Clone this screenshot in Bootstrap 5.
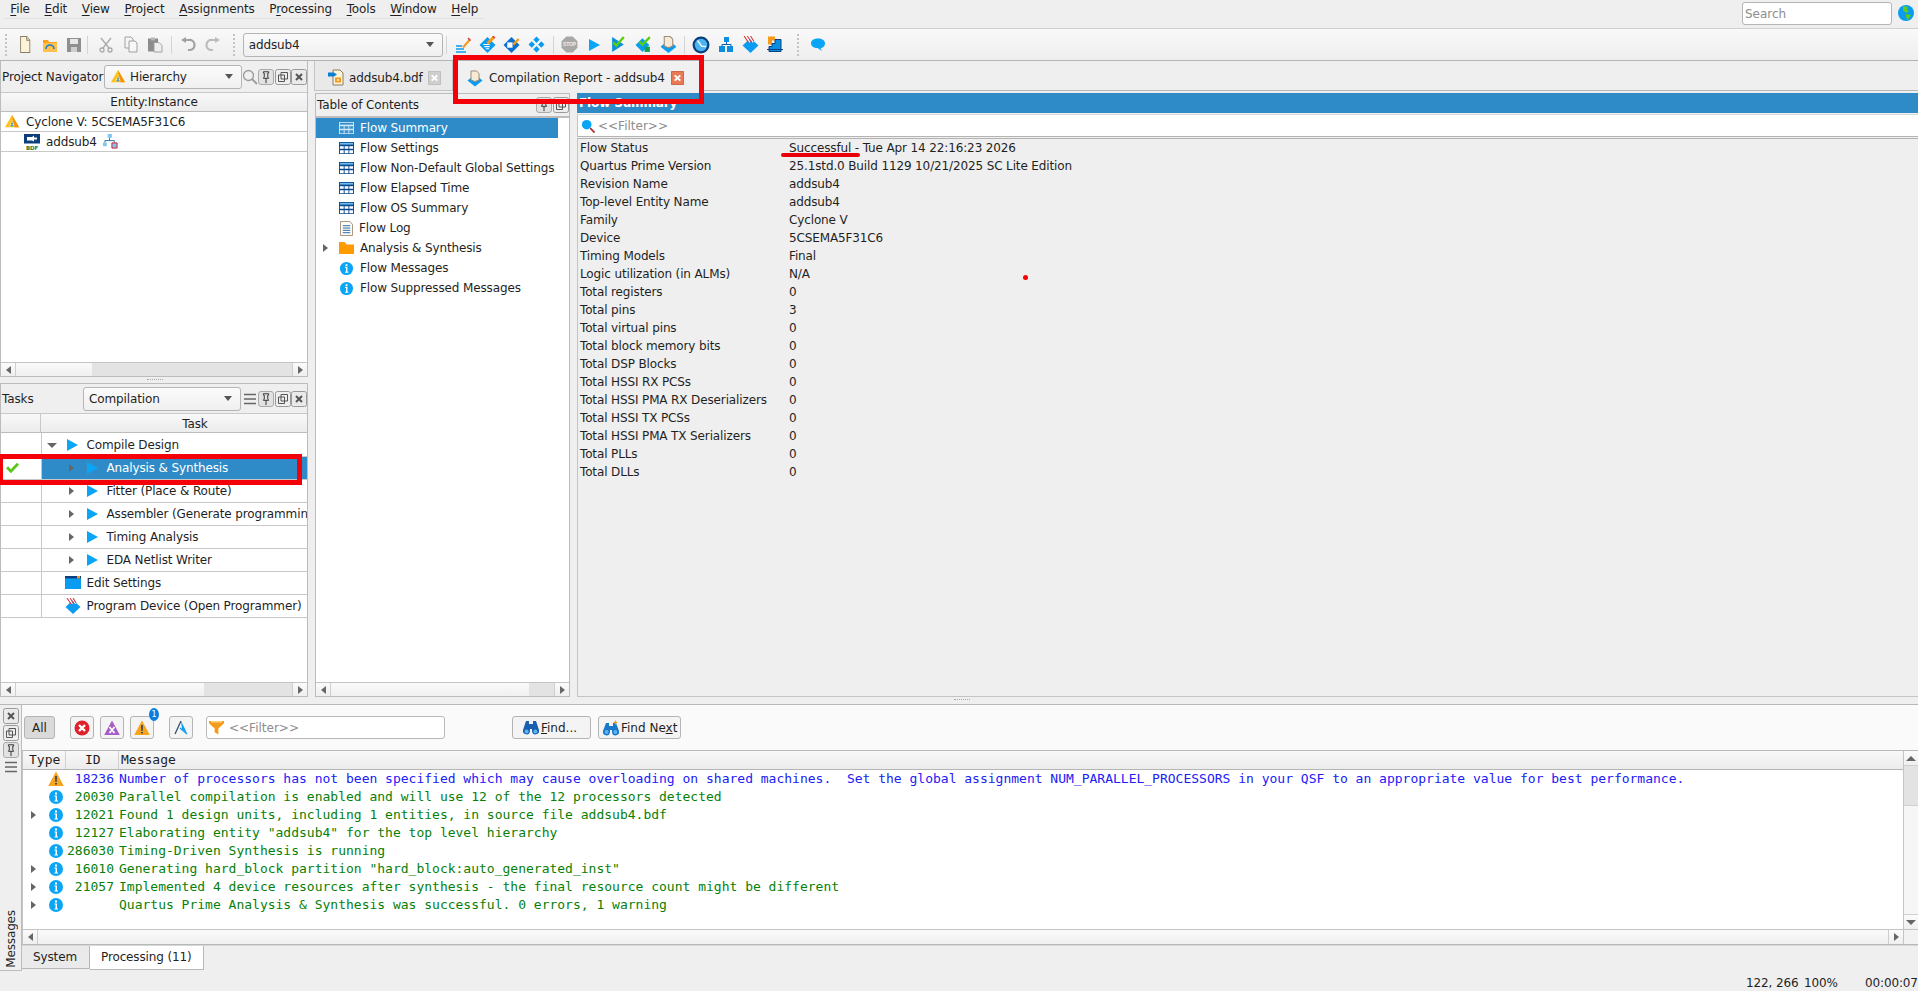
<!DOCTYPE html>
<html lang="en">
<head>
    <meta charset="UTF-8">
    <meta name="viewport" content="width=device-width, initial-scale=1.0">
    <title>Quartus Prime Lite Edition - addsub4</title>
    <link href="https://cdn.jsdelivr.net/npm/bootstrap@5.3.0/dist/css/bootstrap.min.css" rel="stylesheet">
    <style>
        body {
            font-family: "DejaVu Sans", sans-serif;
            font-size: 12px;
            letter-spacing: -0.13px;
            line-height: 18px;
            color: #1f1f1f;
            background: #efefef;
            height: 991px;
            overflow: hidden;
            position: relative;
        }
        svg { display: block; flex: none; }

        /* menu + toolbar */
        .menu-strip { height: 29px; border-bottom: 1px solid #d0d0d0; padding-left: 3px; }
        .menu-entry { height: 19px; padding: 0 7.300px; border-bottom: 1px solid #e2e2e2; }
        .menu-entry u { text-underline-offset: 2px; }
        .search-box { width: 150px; height: 23px; margin: 2px 0 0 auto; border: 1px solid #b5b5b5; border-radius: 3px; padding: 0 2px; font-size: 12px; line-height: 20px; box-shadow: none; background: #fff; }
        .search-box::placeholder, .flt-input::placeholder { color: #8d8d8d; }
        .globe-slot { width: 26px; padding: 5px 0 0 6px; }
        .tool-strip { height: 32px; background: linear-gradient(#f9f9f9, #eeeeee); border-bottom: 1px solid #b4b4b4; padding-left: 5px; }
        .tb-ico { width: 24.6px; height: 31px; }
        .tb-grip { width: 4px; height: 22px; border-left: 2px dotted #c4c4c4; }
        .tb-sep { width: 1px; height: 18px; background: #d4d4d4; }
        .sp-a { width: 6.200px; } .sp-b { width: 3.200px; } .sp-c { width: 4px; } .sp-d { width: 3.500px; } .sp-e { width: 4px; } .sp-f { width: 3.800px; }
        .grip-one { margin: 0 5.600px 0 8px; }
        .grip-two { margin: 0 4.800px 0 9px; }
        .main-combo { width: 200px; margin-right: 3px; }
        .qt-combo { height: 24px; background: linear-gradient(#fbfbfb, #f0f0f0); border: 1px solid #b4b4b4; border-radius: 3px; padding: 0 5px; }
        .qt-caret { width: 0; height: 0; margin-left: auto; margin-right: 3px; border-left: 4px solid transparent; border-right: 4px solid transparent; border-top: 5px solid #555; }

        /* work area */
        .work-area { height: 643px; }
        .left-col { width: 308px; }
        .pane-box { border: 1px solid #bcbcbc; border-top: 0; width: 308px; background: #fff; }
        .nav-pane { height: 316px; }
        .task-pane { height: 314px; border-top: 1px solid #bcbcbc; }
        .pane-head { background: #efefef; height: 31px; padding-left: 1px; white-space: nowrap; }
        .task-pane .pane-head { height: 29px; }
        .nav-title { width: 102px; }
        .task-title { width: 81px; }
        .nav-combo { width: 138px; }
        .task-combo { width: 158px; }
        .ctl-row { margin-left: auto; }
        .ctl-btn { width: 16px; height: 16px; }
        .pin-on { background: #e2e2e2; border: 1px solid #aaa; border-radius: 3px; margin-right: 1px; }
        .col-head { height: 20px; background: linear-gradient(#f8f8f8, #ececec); border-top: 1px solid #c8c8c8; border-bottom: 1px solid #bcbcbc; text-align: center; line-height: 19px; }
        .tree-row { height: 20px; border-bottom: 1px solid #c8c8c8; }
        .dev-row { padding-left: 3px; gap: 6px; }
        .bdf-row { padding-left: 23px; gap: 6px; }
        .grow-fill { flex: 1 1 auto; min-height: 0; }
        .split-dots { height: 6px; font-size: 0; }
        .split-dots i { display: block; width: 16px; margin: 2px 0 0 147px; border-top: 1px dotted #a8a8a8; }
        .split-wide i { margin-left: 640px; }

        .sb-h { height: 14px; background: #f2f2f2; border-top: 1px solid #c4c4c4; flex: none; }
        .sb-btn { width: 15px; height: 100%; background: linear-gradient(#fbfbfb, #efefef); display: flex; align-items: center; justify-content: center; border-right: 1px solid #cfcfcf; flex: none; }
        .sb-btn.end { border-right: 0; border-left: 1px solid #cfcfcf; }
        .sb-track { flex: 1 1 auto; background: linear-gradient(#fafafa, #f0f0f0); }
        .sb-thumb { background: #e3e3e3; flex: none; }
        .nav-thumb { width: 200px; } .task-thumb { width: 88px; } .toc-thumb { width: 25px; }
        .tri-l { width: 0; height: 0; border-top: 4px solid transparent; border-bottom: 4px solid transparent; border-right: 5px solid #666; }
        .tri-r { width: 0; height: 0; border-top: 4px solid transparent; border-bottom: 4px solid transparent; border-left: 5px solid #666; }
        .tri-u { width: 0; height: 0; border-left: 5px solid transparent; border-right: 5px solid transparent; border-bottom: 5px solid #666; }
        .tri-d { width: 0; height: 0; border-left: 5px solid transparent; border-right: 5px solid transparent; border-top: 5px solid #666; }
        .tri-r, .tri-d, .tri-l, .tri-u { flex: none; }

        .task-grid { --bs-table-bg: transparent; margin: 0; table-layout: fixed; width: 306px; border-collapse: collapse; }
        .task-grid td { height: 23px; padding: 0; border: 1px solid #c8c8c8; border-top: 0; color: #1f1f1f; white-space: nowrap; overflow: hidden; background: #fff; box-shadow: none; }
        .task-grid td:first-child { width: 40px; border-left: 0; }
        .task-grid td:last-child { border-right: 0; }
        .task-head { height: 20px; display: flex; background: linear-gradient(#f8f8f8, #ececec); border-top: 1px solid #c8c8c8; border-bottom: 1px solid #bcbcbc; }
        .task-head div:first-child { width: 40px; border-right: 1px solid #c8c8c8; }
        .task-head div:last-child { flex: 1; text-align: center; line-height: 21px; padding-left: 42px; }
        .cell-flex { height: 22px; }
        .lvl-one { padding: 2px 0 0 5px; }
        .lvl-one svg { margin: 0 8.500px 0 10.500px; }
        .lvl-two { padding-left: 27.500px; }
        .lvl-two svg { margin: 0 8.500px 0 13px; }
        .lvl-leaf { padding-left: 23px; }
        .lvl-leaf svg { margin-right: 6px; }
        .task-sel, .task-grid td.task-sel { background: #2e8bc7; color: #fff; }

        /* report */
        .center-col { width: 1610px; margin-left: 6px; }
        .tab-strip { height: 32px; }
        .doc-tab { height: 30px; padding: 4px 13px 0 13px; gap: 5px; border: 1px solid #c4c4c4; border-top: 0; background: #e9e9e9; width: 139px; white-space: nowrap; }
        .doc-tab.on { background: #f0f0f0; width: 251px; border: 0; padding: 4px 20px 0 14px; gap: 6px; }
        .tab-line { flex: 1 1 auto; height: 30px; border-bottom: 1px solid #b8b8b8; }
        .tab-x { margin-left: auto; }
        .report-row { height: 604px; }
        .toc-pane { width: 255px; border: 1px solid #bcbcbc; background: #fff; margin-left: 1px; }
        .toc-head { height: 24px; background: #efefef; border-bottom: 2px solid #bcbcbc; padding-left: 1px; }
        .toc-line { height: 20px; width: 242px; white-space: nowrap; }
        .toc-line.sel { background: #2e8bc7; color: #fff; }
        .toc-arrow { width: 23px; padding-left: 7px; flex: none; }
        .toc-ico { margin-right: 6px; width: 15px; }
        .toc-slim { margin-left: 1px; margin-right: 6px; width: 13px; }
        .summary-pane { width: 1341px; margin-left: 7px; flex: none; }
        .flow-title { height: 20px; background: #2e8bc7; color: #fff; font-weight: 700; padding-left: 2px; line-height: 20px; }
        .flow-filter { height: 23px; margin-top: 1px; background: #fff; border-top: 1px solid #d8d8d8; border-bottom: 1px solid #b4b4b4; border-left: 1px solid #c4c4c4; padding-left: 3px; gap: 3px; }
        .flt-input { border: 0; padding: 0; font-size: 12px; background: transparent; box-shadow: none; line-height: 18px; }
        .flow-body { flex: 1 1 auto; margin-top: 1px; border-top: 1px solid #b4b4b4; border-left: 1px solid #c4c4c4; border-bottom: 1px solid #c4c4c4; padding: 0 0 0 2px; }
        .flow-grid { --bs-table-bg: transparent; margin: 0; width: auto; }
        .flow-grid td { padding: 0; height: 18px; line-height: 18px; border: 0; color: #1f1f1f; white-space: nowrap; }
        .flow-grid td:first-child { width: 209px; }

        /* messages */
        .msg-dock { height: 267px; border-top: 1px solid #b8b8b8; }
        .dock-rail { width: 22px; border-right: 1px solid #bcbcbc; border-bottom: 1px solid #bcbcbc; padding: 3px 0 0 3px; gap: 1px; }
        .rail-btn { width: 16px; height: 16px; }
        .rail-pin { height: 16px; width: 16px; margin: 0; }
        .rail-text { writing-mode: vertical-rl; transform: rotate(180deg); margin-top: auto; line-height: 16px; margin-bottom: 2px; }
        .dock-main { width: 1896px; }
        .msg-tools { height: 45px; background: #fafafa; padding-left: 2px; position: relative; }
        .flag-btn, .btn.flag-btn { width: 24px; height: 23px; padding: 0; border: 1px solid #b4b4b4; border-radius: 3px; background: #f4f4f4; display: flex; align-items: center; justify-content: center; }
        .btn.all-btn { width: 31px; height: 23px; padding: 0; font-size: 12px; line-height: 20px; background: #dadada; border: 1px solid #b4b4b4; border-radius: 3px; color: #1f1f1f; margin-right: 15px; }
        .gap-flag { margin-left: 6px; }
        .gap-mark { margin-left: 15px; }
        .count-dot { position: absolute; left: 127px; top: 3px; width: 10px; height: 13px; border-radius: 50%; background: #0a7fe0; color: #fff; font-size: 8px; line-height: 13px; text-align: center; }
        .msg-filter { width: 239px; height: 23px; margin-left: 13px; background: #fff; border: 1px solid #b8b8b8; border-radius: 3px; padding-left: 2px; gap: 5px; }
        .btn.find-btn { height: 23px; padding: 0 0 0 4px; font-size: 12px; line-height: 20px; background: #f4f4f4; border: 1px solid #b4b4b4; border-radius: 3px; color: #1f1f1f; display: flex; align-items: center; gap: 2px; white-space: nowrap; }
        .btn.find-one { width: 79px; margin-left: 67px; padding-left: 10px; }
        .btn.find-two { width: 83px; margin-left: 7px; }
        .msg-body { height: 194px; }
        .msg-table { width: 1881px; background: #fff; }
        .msg-col-head { height: 20px; background: linear-gradient(#f8f8f8, #ececec); border-top: 1px solid #b8b8b8; border-bottom: 1px solid #b4b4b4; border-left: 1px solid #c4c4c4; font-family: "DejaVu Sans Mono", monospace; font-size: 13px; letter-spacing: 0; line-height: 18px; }
        .mh-type { width: 43px; padding-left: 6px; border-right: 1px solid #d0d0d0; }
        .mh-id { width: 53px; padding-left: 19px; border-right: 1px solid #d0d0d0; }
        .mh-msg { padding-left: 2px; }
        .msg-list { height: 159px; font-family: "DejaVu Sans Mono", monospace; font-size: 13px; letter-spacing: 0; border-left: 1px solid #c4c4c4; }
        .msg-line { height: 18px; white-space: pre; }
        .msg-arrow { width: 25px; padding-left: 8px; flex: none; }
        .msg-num { width: 50px; text-align: right; flex: none; }
        .msg-text { margin-left: 5px; }
        .tone-info { color: #087f08; }
        .tone-warn { color: #2020f5; }
        .sb-v { width: 15px; border-top: 1px solid #b8b8b8; border-left: 1px solid #c4c4c4; background: #f6f6f6; }
        .sb-vbtn { height: 15px; display: flex; align-items: center; justify-content: center; background: linear-gradient(#fbfbfb, #efefef); border-bottom: 1px solid #cfcfcf; }
        .sb-vbtn.end { border-bottom: 0; border-top: 1px solid #cfcfcf; margin-top: auto; }
        .sb-vthumb { height: 40px; background: #e3e3e3; border-bottom: 1px solid #d0d0d0; }
        .msg-hbar { height: 15px; border-left: 1px solid #c4c4c4; border-top: 1px solid #c4c4c4; background: #f4f4f4; }
        .corner-box { width: 15px; flex: none; border-left: 0; background: #f2f2f2; }
        .dock-line { height: 2px; border-top: 1px solid #b8b8b8; border-bottom: 1px solid #d8d8d8; }
        .view-tab { height: 23px; width: 68px; padding: 2px 0 0 11px; background: #eaeaea; border-right: 1px solid #b8b8b8; border-bottom: 1px solid #b8b8b8; }
        .view-tab.on { width: 114px; background: #fff; height: 24px; }

        .status-strip { height: 20px; padding-top: 3px; }
        .st-xy { width: 58px; }
        .st-zoom { width: 61px; }
        .st-time { width: 53px; white-space: nowrap; }

        /* annotations drawn on top of the screenshot */
        .red-box { position: absolute; border-style: solid; border-color: #f40008; pointer-events: none; }
        .red-tab { left: 453px; top: 55px; width: 251px; height: 49px; border-width: 5px; }
        .red-task { left: 0; top: 454px; width: 302px; height: 31px; border-width: 5px 5px 5px 3px; }
        .red-line { position: absolute; left: 781px; top: 153px; width: 79px; height: 4px; border-radius: 2px; background: #e8000b; }
        .red-dot { position: absolute; left: 1023px; top: 275px; width: 5px; height: 5px; border-radius: 50%; background: #f00; }
    </style>
</head>
<body>
    <svg width="0" height="0" class="position-absolute">
        <defs>
            <symbol id="i-new" viewBox="0 0 16 16" preserveAspectRatio="none"><path d="M3 .5h7l3.500 3.500V15.500H3z" fill="#fff3d6" stroke="#8a7a68"/><path d="M10 .5V4h3.500" fill="#e8dcc4" stroke="#8a7a68"/></symbol>
            <symbol id="i-open" viewBox="0 0 16 16"><path d="M1 3h5l1 2h8v10H1z" fill="#f9a11b"/><path d="M1 6h14v9H1z" fill="#ffc04d"/><path d="M4 12a4 4 0 0 1 8 0" fill="none" stroke="#1b7fd0" stroke-width="1.600"/></symbol>
            <symbol id="i-save" viewBox="0 0 16 16"><path d="M1 1h14v14H1z" fill="#8f8f8f"/><path d="M4 2h8v5H4z" fill="#e8e8e8"/><path d="M5 10h6v5H5z" fill="#cfcfcf"/></symbol>
            <symbol id="i-cut" viewBox="0 0 16 16"><g fill="none" stroke="#a8a8a8" stroke-width="1.300"><path d="M13 1 5 11M3 1l8 10"/><circle cx="4" cy="13" r="2"/><circle cx="12" cy="13" r="2"/></g></symbol>
            <symbol id="i-copy" viewBox="0 0 16 16"><g fill="#f6f6f6" stroke="#a0a0a0"><path d="M2 .5h6l2 2v9H2z"/><path d="M6 4.500h6l2 2v9H6z"/></g></symbol>
            <symbol id="i-paste" viewBox="0 0 16 16"><path d="M1 2h10v13H1z" fill="#8c8c8c"/><path d="M4 1h4v3H4z" fill="#b8b8b8"/><path d="M7 6h5l3 3v6.500H7z" fill="#efefef" stroke="#a0a0a0"/></symbol>
            <symbol id="i-undo" viewBox="0 0 16 16"><path d="M4 3h5a5 5 0 0 1 1 10H8" fill="none" stroke="#a2a2a2" stroke-width="2.200"/><path d="M6 0v6L1 3z" fill="#a2a2a2"/></symbol>
            <symbol id="i-redo" viewBox="0 0 16 16"><path d="M12 3H7a5 5 0 0 0-1 10h2" fill="none" stroke="#bcbcbc" stroke-width="2.200"/><path d="M10 0v6l5-3z" fill="#bcbcbc"/></symbol>
            <symbol id="i-pen" viewBox="0 0 16 16"><path d="M1 9h6M1 12h8M1 15h10" stroke="#0a9cf0" stroke-width="1.500"/><path d="M7 10 14 2l1.500 1.500L9 11z" fill="#f59a1b"/><path d="M13 1l2.500 2.500" stroke="#d8363a" stroke-width="1.500"/></symbol>
            <symbol id="i-dia-pen" viewBox="0 0 16 16"><path d="M8 1l7.500 7.500L8 16 .5 8.500z" fill="#0a9cf0"/><path d="M4 8h6M5 10h5M6.500 12h3" stroke="#fff"/><path d="M7 6l6-6 2 2-6 6z" fill="#f59a1b"/><path d="M13 0l2 2" stroke="#d8363a" stroke-width="1.300"/></symbol>
            <symbol id="i-dia-plug" viewBox="0 0 16 16"><path d="M8 1l7.500 7.500L8 16 .5 8.500z" fill="#0a6fd0"/><path d="M4 6h5v5H4z" fill="#fff"/><path d="M9 7l5-5 1.500 1.500L10.500 9z" fill="#f59a1b"/></symbol>
            <symbol id="i-dia-four" viewBox="0 0 16 16"><g fill="#0a9cf0"><path d="M8 .5l3 3-3 3-3-3z"/><path d="M12.500 5l3 3-3 3-3-3z"/><path d="M3.500 5l3 3-3 3-3-3z"/><path d="M8 9.500l3 3-3 3-3-3z"/></g><path d="M6 10l5-5" stroke="#fff"/></symbol>
            <symbol id="i-stop" viewBox="0 0 16 16"><path d="M5 .5h6L15.500 5v6L11 15.500H5L.5 11V5z" fill="#a8a8a8"/><text x="8" y="9.800" text-anchor="middle" font-size="4.800" font-weight="700" font-family="Liberation Sans, sans-serif" fill="#eee">STOP</text></symbol>
            <symbol id="i-play" viewBox="2.500 1.500 11.500 13" preserveAspectRatio="none"><path d="M2.500 1.500 14 8 2.500 14.500z" fill="#0aa6f5"/></symbol>
            <symbol id="i-play-chk" viewBox="0 0 16 16"><path d="M2 1 13 8 2 15z" fill="#0a8fe0"/><path d="M3 6l3 3 7-8" fill="none" stroke="#55d010" stroke-width="2.200"/></symbol>
            <symbol id="i-dia-chk" viewBox="0 0 16 16"><path d="M7 2l6.500 6.500L7 15 .5 8.500z" fill="#0a9cf0"/><path d="M4 5l3 3 7-7" fill="none" stroke="#55d010" stroke-width="2.200"/><path d="M9 10h5v5H9z" fill="#10a050"/></symbol>
            <symbol id="i-dia-page" viewBox="0 0 16 16"><path d="M8 4l7.500 6L8 16 .5 10z" fill="#0a9cf0"/><path d="M4 .5h5.500L12 3v6.500l-4 1.500-4-1.500z" fill="#f8ebd6" stroke="#a08a78"/></symbol>
            <symbol id="i-clock" viewBox="0 0 16 16"><circle cx="8" cy="8" r="7.500" fill="#0c3f7c"/><circle cx="8" cy="8" r="5.500" fill="#4db4f2"/><path d="M5 4l3.500 5 4 .5" fill="none" stroke="#fff" stroke-width="1.200"/></symbol>
            <symbol id="i-hier" viewBox="0 0 16 16"><g fill="#0a8fe0"><path d="M6 0h5v5H6z"/><path d="M1 9h6v6H1z"/><path d="M9 9h6v6H9z"/></g><path d="M8.500 5v3M4 9V7.500h9V9" fill="none" stroke="#0c5fa8"/></symbol>
            <symbol id="i-prog" viewBox="0 0 16 16"><path d="M8 2l7.500 7L8 16 .5 9z" fill="#0a9cf0"/><path d="M2 0l4 6M5 0l4 6M8 0l3 5" stroke="#d8363a" stroke-width="1.100"/><path d="M3.500 0l4 6M6.500 0l4 6" stroke="#fff"/></symbol>
            <symbol id="i-chip" viewBox="0 0 16 16"><path d="M1 0h7v4H5v4H1z" fill="#f59a1b"/><path d="M2 15V10h3V7h3V3h6v12z" fill="#0a8fe0" stroke="#0c3f7c"/><path d="M0 13h16" stroke="#0c3f7c"/></symbol>
            <symbol id="i-bubble" viewBox="0 0 16 16"><path d="M8 1.500c4 0 7 1.800 7 4.700S12.800 11 10.500 11l1.500 3-4.500-3C3.500 11 1 9 1 6.200S4 1.500 8 1.500z" fill="#0aa6f5"/></symbol>
            <symbol id="i-globe" viewBox="0 0 16 16"><circle cx="8" cy="8" r="8" fill="#0a9cf0"/><path d="M5 1l5 1-1 3 2 1-3 2-3-3zM8 9l5 1-3 5-2-3z" fill="#60cc18"/></symbol>
            <symbol id="i-device" viewBox="0 0 16 16"><path d="M8 1l7.500 13H.5z" fill="#ffc21a"/><path d="M8 1 15.500 14h-5z" fill="#f59000"/><path d="M8 6 11 13H5z" fill="#ffe680"/><path d="M6.500 12.500h3M7 10.500h2M7.500 8.500h1" stroke="#0a7fe0" stroke-width="1.200"/></symbol>
            <symbol id="i-bdf" viewBox="0 0 16 16"><path d="M0 0h16v9.500H0z" fill="#0c3f7c"/><path d="M3 3h5l2-1.500v2h3v2h-3v2L8 6.500H3z" fill="#fff"/><text x="8" y="15.800" text-anchor="middle" font-size="5.500" font-weight="700" font-family="DejaVu Sans, sans-serif" fill="#1f7a30">BDF</text></symbol>
            <symbol id="i-tree" viewBox="0 0 16 16"><path d="M5 0h4.500v4H5zM0 9h4v4H0z" fill="#7fc8ef"/><path d="M7 4v3M2 9V7h10v2" fill="none" stroke="#2a6fa8"/><path d="M9.500 9.500H15V15H9.500z" fill="#7fc8ef" stroke="#e01020"/></symbol>
            <symbol id="i-bdf-doc" viewBox="0 0 16 16"><path d="M5 .5h7l3 3V15.500H5z" fill="#fff3d6" stroke="#8a7a68"/><path d="M0 3h6l3 2-3 2H0z" fill="#0a7fd0"/><path d="M7 8h6v5H7z" fill="#f59a1b"/><path d="M9 10.500h2M10 9.500v2" stroke="#fff"/></symbol>
            <symbol id="i-x" viewBox="0 0 16 16"><path d="M2.500.5h11a2 2 0 0 1 2 2v11a2 2 0 0 1-2 2h-11a2 2 0 0 1-2-2v-11a2 2 0 0 1 2-2z" fill="#eaeaea" stroke="#9a9a9a"/><path d="M5 5l6 6M11 5l-6 6" stroke="#555" stroke-width="2"/></symbol>
            <symbol id="i-tab-x" viewBox="0 0 14 16" preserveAspectRatio="none"><path d="M.5.5h13v15H.5z" fill="#cfcfcf" stroke="#bbb"/><path d="M4 5l6 6M10 5l-6 6" stroke="#fff" stroke-width="2.200"/></symbol>
            <symbol id="i-tab-xr" viewBox="0 0 14 16" preserveAspectRatio="none"><path d="M.5.5h13v15H.5z" fill="#e87a55" stroke="#cc5a40"/><path d="M4 5l6 6M10 5l-6 6" stroke="#fff" stroke-width="2.200"/></symbol>
            <symbol id="i-float" viewBox="0 0 16 16"><path d="M2.500.5h11a2 2 0 0 1 2 2v11a2 2 0 0 1-2 2h-11a2 2 0 0 1-2-2v-11a2 2 0 0 1 2-2z" fill="#eee" stroke="#9a9a9a"/><path d="M6 3.500h6.500V10H6zM3.500 6H9.500V12.500H3.500z" fill="none" stroke="#555"/></symbol>
            <symbol id="i-pin" viewBox="0 0 16 16"><path d="M5 2h6v1.500H10V8l1 1.500H5L6 8V3.500H5zM8 9.500V15" fill="none" stroke="#333" stroke-width="1.100"/></symbol>
            <symbol id="i-lens" viewBox="0 0 16 16"><circle cx="6.500" cy="6.500" r="5" fill="none" stroke="#9a9a9a" stroke-width="1.300"/><path d="M10 10l5 5" stroke="#9a9a9a" stroke-width="1.800"/></symbol>
            <symbol id="i-list" viewBox="0 0 16 16"><path d="M2 3.500h12M2 8h12M2 12.500h12" stroke="#666" stroke-width="1.600"/></symbol>
            <symbol id="i-check" viewBox="0 0 16 16"><path d="M0 9l2.500-2.500L6 10l7.500-8L16 4.500 6 15z" fill="#58c81a"/></symbol>
            <symbol id="i-settings" viewBox="0 0 16 16" preserveAspectRatio="none"><path d="M0 0h16v16H0z" fill="#0a9cf0"/><path d="M0 0h16v3H0z" fill="#0c3f7c"/><path d="M12 0h3v3h-3z" fill="#f59a1b"/></symbol>
            <symbol id="i-grid" viewBox="0 0 16 14" preserveAspectRatio="none"><path d="M0 0h16v14H0z" fill="#0c4a90"/><path d="M1 1h14v2H1z" fill="#6cbcec"/><path d="M1 5h4v3H1zM6 5h4v3H6zM11 5h4v3h-4zM1 9.500h4V13H1zM6 9.500h4V13H6zM11 9.500h4V13h-4z" fill="#fff"/></symbol>
            <symbol id="i-grid-sel" viewBox="0 0 16 14" preserveAspectRatio="none"><path d="M0 0h16v14H0z" fill="#cfe6f6"/><path d="M1 1h14v2H1z" fill="#2e8bc7"/><path d="M1 5h4v3H1zM6 5h4v3H6zM11 5h4v3h-4zM1 9.500h4V13H1zM6 9.500h4V13H6zM11 9.500h4V13h-4z" fill="#3a93cc"/></symbol>
            <symbol id="i-log" viewBox="0 0 14 16"><path d="M.5.5h10l3 3v12H.5z" fill="#fffdf6" stroke="#a08a78"/><path d="M3 5h8M3 7.500h8M3 10h8M3 12.500h8" stroke="#1a5fb0"/></symbol>
            <symbol id="i-folder" viewBox="0 0 16 14" preserveAspectRatio="none"><path d="M0 0h6l2 3h8v11H0z" fill="#ff9a00"/></symbol>
            <symbol id="i-info" viewBox="0 0 16 16"><circle cx="8" cy="8" r="7" fill="#0aa6f5"/><path d="M7 3.500h2v2H7zM6.500 6.500H9v5h1v1H6.500v-1h1v-4h-1z" fill="#fff"/></symbol>
            <symbol id="i-warn" viewBox="0 0 16 16"><path d="M8 .5 15.800 15H.2z" fill="#f7a51c"/><path d="M7.200 5h1.600l-.2 6H7.400zM7.200 12h1.600v1.600H7.200z" fill="#17356b"/></symbol>
            <symbol id="i-err" viewBox="0 0 16 16"><circle cx="8" cy="8" r="7.500" fill="#e0202a"/><path d="M5 5l6 6M11 5l-6 6" stroke="#fff" stroke-width="2.400"/></symbol>
            <symbol id="i-crit" viewBox="0 0 16 16"><path d="M8 .5 15.800 15H.2z" fill="#a85cc8"/><path d="M5.500 7l5 6M10.500 7l-5 6" stroke="#fff" stroke-width="1.800"/></symbol>
            <symbol id="i-mark" viewBox="0 0 16 16"><path d="M8 1 14 13 9 9z" fill="#0a9cf0"/><path d="M8 1 2 14" stroke="#33506e" stroke-width="1.300"/><path d="M7 8l7 6" stroke="#0a9cf0" stroke-width="1.300"/></symbol>
            <symbol id="i-funnel" viewBox="0 0 16 16"><path d="M0 1h16v2.500L10 9v6.500L6 13V9L0 3.500z" fill="#f59a1b"/><path d="M2 2h12" stroke="#fff3c4"/></symbol>
            <symbol id="i-find" viewBox="0 0 16 16"><path d="M3 1h3v3h4V1h3l3 9a3.500 3.500 0 1 1-7 1.500V9H7v2.500A3.500 3.500 0 1 1 0 10z" fill="#1a5fb0"/><circle cx="3.600" cy="11.500" r="2" fill="#5bb5ee"/><circle cx="12.400" cy="11.500" r="2" fill="#5bb5ee"/></symbol>
            <symbol id="i-find-star" viewBox="0 0 16 16"><path d="M3 3h3v3h4V3h3l3 8a3.500 3.500 0 1 1-7 1.500V10H7v2.500A3.500 3.500 0 1 1 0 11z" fill="#1a78c8"/><circle cx="3.600" cy="12" r="2" fill="#5bb5ee"/><circle cx="12.400" cy="12" r="2" fill="#5bb5ee"/><path d="M12.500 0l.8 1.700 1.700.8-1.700.8-.8 1.700-.8-1.700-1.700-.8 1.700-.8z" fill="#f59a1b"/></symbol>
            <symbol id="i-search-blue" viewBox="0 0 16 16"><circle cx="6.500" cy="6.500" r="5.500" fill="#0aa6f5"/><path d="M10.500 10.500l5 5" stroke="#b03030" stroke-width="2"/></symbol>
        </defs>
    </svg>

    <!-- menu -->
    <nav class="menu-strip d-flex align-items-start">
        <span class="menu-entry"><u>F</u>ile</span>
        <span class="menu-entry"><u>E</u>dit</span>
        <span class="menu-entry"><u>V</u>iew</span>
        <span class="menu-entry"><u>P</u>roject</span>
        <span class="menu-entry"><u>A</u>ssignments</span>
        <span class="menu-entry">P<u>r</u>ocessing</span>
        <span class="menu-entry"><u>T</u>ools</span>
        <span class="menu-entry"><u>W</u>indow</span>
        <span class="menu-entry"><u>H</u>elp</span>
        <input class="form-control search-box" placeholder="Search">
        <div class="globe-slot"><svg width="16" height="16"><use href="#i-globe"/></svg></div>
    </nav>

    <!-- main toolbar -->
    <div class="tool-strip d-flex align-items-center">
        <div class="tb-grip"></div>
        <div class="tb-ico d-flex align-items-center justify-content-center ms-1"><svg width="14" height="17"><use href="#i-new"/></svg></div>
        <div class="tb-ico d-flex align-items-center justify-content-center"><svg width="16" height="16"><use href="#i-open"/></svg></div>
        <div class="tb-ico d-flex align-items-center justify-content-center"><svg width="16" height="16"><use href="#i-save"/></svg></div>
        <div class="tb-sep"></div><div class="sp-a"></div>
        <div class="tb-ico d-flex align-items-center justify-content-center"><svg width="16" height="16"><use href="#i-cut"/></svg></div>
        <div class="tb-ico d-flex align-items-center justify-content-center"><svg width="16" height="17"><use href="#i-copy"/></svg></div>
        <div class="tb-ico d-flex align-items-center justify-content-center"><svg width="16" height="17"><use href="#i-paste"/></svg></div>
        <div class="sp-b"></div><div class="tb-sep"></div><div class="sp-c"></div>
        <div class="tb-ico d-flex align-items-center justify-content-center"><svg width="16" height="16"><use href="#i-undo"/></svg></div>
        <div class="tb-ico d-flex align-items-center justify-content-center"><svg width="16" height="16"><use href="#i-redo"/></svg></div>
        <div class="tb-grip grip-one"></div>
        <div class="qt-combo main-combo d-flex align-items-center">addsub4<span class="qt-caret"></span></div>
        <div class="tb-sep"></div><div class="sp-d"></div>
        <div class="tb-ico d-flex align-items-center justify-content-center"><svg width="16" height="16"><use href="#i-pen"/></svg></div>
        <div class="tb-ico d-flex align-items-center justify-content-center"><svg width="17" height="17"><use href="#i-dia-pen"/></svg></div>
        <div class="tb-ico d-flex align-items-center justify-content-center"><svg width="17" height="17"><use href="#i-dia-plug"/></svg></div>
        <div class="tb-ico d-flex align-items-center justify-content-center"><svg width="17" height="17"><use href="#i-dia-four"/></svg></div>
        <div class="sp-e"></div><div class="tb-sep"></div><div class="sp-f"></div>
        <div class="tb-ico d-flex align-items-center justify-content-center"><svg width="17" height="17"><use href="#i-stop"/></svg></div>
        <div class="tb-ico d-flex align-items-center justify-content-center"><svg width="11" height="12"><use href="#i-play"/></svg></div>
        <div class="tb-ico d-flex align-items-center justify-content-center"><svg width="17" height="17"><use href="#i-play-chk"/></svg></div>
        <div class="tb-ico d-flex align-items-center justify-content-center"><svg width="17" height="17"><use href="#i-dia-chk"/></svg></div>
        <div class="tb-ico d-flex align-items-center justify-content-center"><svg width="17" height="17"><use href="#i-dia-page"/></svg></div>
        <div class="sp-e"></div><div class="tb-sep"></div><div class="sp-f"></div>
        <div class="tb-ico d-flex align-items-center justify-content-center"><svg width="18" height="18"><use href="#i-clock"/></svg></div>
        <div class="tb-ico d-flex align-items-center justify-content-center"><svg width="16" height="16"><use href="#i-hier"/></svg></div>
        <div class="tb-ico d-flex align-items-center justify-content-center"><svg width="17" height="17"><use href="#i-prog"/></svg></div>
        <div class="tb-ico d-flex align-items-center justify-content-center"><svg width="16" height="17"><use href="#i-chip"/></svg></div>
        <div class="tb-grip grip-two"></div>
        <div class="tb-ico d-flex align-items-center justify-content-center"><svg width="16" height="16"><use href="#i-bubble"/></svg></div>
    </div>

    <div class="work-area d-flex">
        <!-- project navigator + tasks -->
        <div class="left-col d-flex flex-column">
            <section class="pane-box nav-pane d-flex flex-column">
                <div class="pane-head d-flex align-items-center">
                    <span class="nav-title">Project Navigator</span>
                    <div class="qt-combo nav-combo d-flex align-items-center gap-1"><svg width="16" height="15"><use href="#i-device"/></svg>Hierarchy<span class="qt-caret"></span></div>
                    <div class="ctl-row d-flex align-items-center">
                        <svg class="ctl-btn" width="14" height="14"><use href="#i-lens"/></svg>
                        <div class="ctl-btn pin-on"><svg width="14" height="14"><use href="#i-pin"/></svg></div>
                        <svg class="ctl-btn" width="14" height="14"><use href="#i-float"/></svg>
                        <svg class="ctl-btn" width="14" height="14"><use href="#i-x"/></svg>
                    </div>
                </div>
                <div class="col-head">Entity:Instance</div>
                <div class="tree-row dev-row d-flex align-items-center"><svg width="16" height="15"><use href="#i-device"/></svg>Cyclone V: 5CSEMA5F31C6</div>
                <div class="tree-row bdf-row d-flex align-items-center"><svg width="16" height="16"><use href="#i-bdf"/></svg>addsub4<svg width="15" height="15"><use href="#i-tree"/></svg></div>
                <div class="grow-fill"></div>
                <div class="sb-h d-flex"><div class="sb-btn"><span class="tri-l"></span></div><div class="sb-track"></div><div class="sb-thumb nav-thumb"></div><div class="sb-btn end"><span class="tri-r"></span></div></div>
            </section>
            <div class="split-dots"><i></i></div>
            <section class="pane-box task-pane d-flex flex-column">
                <div class="pane-head d-flex align-items-center">
                    <span class="task-title">Tasks</span>
                    <div class="qt-combo task-combo d-flex align-items-center">Compilation<span class="qt-caret"></span></div>
                    <div class="ctl-row d-flex align-items-center">
                        <svg class="ctl-btn" width="14" height="14"><use href="#i-list"/></svg>
                        <div class="ctl-btn pin-on"><svg width="14" height="14"><use href="#i-pin"/></svg></div>
                        <svg class="ctl-btn" width="14" height="14"><use href="#i-float"/></svg>
                        <svg class="ctl-btn" width="14" height="14"><use href="#i-x"/></svg>
                    </div>
                </div>
                <div class="task-head"><div></div><div>Task</div></div>
                <table class="table task-grid">
                    <tr><td></td><td><div class="cell-flex d-flex align-items-center lvl-one"><span class="tri-d"></span><svg width="11" height="12"><use href="#i-play"/></svg>Compile Design</div></td></tr>
                    <tr><td><div class="cell-flex d-flex align-items-center ps-1"><svg width="15" height="13"><use href="#i-check"/></svg></div></td><td class="task-sel"><div class="cell-flex d-flex align-items-center lvl-two"><span class="tri-r"></span><svg width="11" height="12"><use href="#i-play"/></svg>Analysis &amp; Synthesis</div></td></tr>
                    <tr><td></td><td><div class="cell-flex d-flex align-items-center lvl-two"><span class="tri-r"></span><svg width="11" height="12"><use href="#i-play"/></svg>Fitter (Place &amp; Route)</div></td></tr>
                    <tr><td></td><td><div class="cell-flex d-flex align-items-center lvl-two"><span class="tri-r"></span><svg width="11" height="12"><use href="#i-play"/></svg>Assembler (Generate programming files)</div></td></tr>
                    <tr><td></td><td><div class="cell-flex d-flex align-items-center lvl-two"><span class="tri-r"></span><svg width="11" height="12"><use href="#i-play"/></svg>Timing Analysis</div></td></tr>
                    <tr><td></td><td><div class="cell-flex d-flex align-items-center lvl-two"><span class="tri-r"></span><svg width="11" height="12"><use href="#i-play"/></svg>EDA Netlist Writer</div></td></tr>
                    <tr><td></td><td><div class="cell-flex d-flex align-items-center lvl-leaf"><svg width="16" height="13"><use href="#i-settings"/></svg>Edit Settings</div></td></tr>
                    <tr><td></td><td><div class="cell-flex d-flex align-items-center lvl-leaf"><svg width="16" height="16"><use href="#i-prog"/></svg>Program Device (Open Programmer)</div></td></tr>
                </table>
                <div class="grow-fill"></div>
                <div class="sb-h d-flex"><div class="sb-btn"><span class="tri-l"></span></div><div class="sb-track"></div><div class="sb-thumb task-thumb"></div><div class="sb-btn end"><span class="tri-r"></span></div></div>
            </section>
        </div>

        <!-- compilation report -->
        <div class="center-col d-flex flex-column">
            <div class="tab-strip d-flex align-items-start">
                <div class="doc-tab d-flex align-items-center"><svg width="16" height="17"><use href="#i-bdf-doc"/></svg>addsub4.bdf<svg class="tab-x" width="13" height="14"><use href="#i-tab-x"/></svg></div>
                <div class="doc-tab on d-flex align-items-center"><svg width="16" height="17"><use href="#i-dia-page"/></svg>Compilation Report - addsub4<svg class="tab-x" width="13" height="14"><use href="#i-tab-xr"/></svg></div>
                <div class="tab-line"></div>
            </div>
            <div class="report-row d-flex">
                <aside class="toc-pane d-flex flex-column">
                    <div class="toc-head d-flex align-items-center">
                        Table of Contents
                        <div class="ctl-row d-flex align-items-center">
                            <div class="ctl-btn pin-on"><svg width="14" height="14"><use href="#i-pin"/></svg></div>
                            <svg class="ctl-btn" width="14" height="14"><use href="#i-float"/></svg>
                        </div>
                    </div>
                    <div class="toc-line sel d-flex align-items-center"><span class="toc-arrow"></span><svg class="toc-ico" width="15" height="12"><use href="#i-grid-sel"/></svg>Flow Summary</div>
                    <div class="toc-line d-flex align-items-center"><span class="toc-arrow"></span><svg class="toc-ico" width="15" height="12"><use href="#i-grid"/></svg>Flow Settings</div>
                    <div class="toc-line d-flex align-items-center"><span class="toc-arrow"></span><svg class="toc-ico" width="15" height="12"><use href="#i-grid"/></svg>Flow Non-Default Global Settings</div>
                    <div class="toc-line d-flex align-items-center"><span class="toc-arrow"></span><svg class="toc-ico" width="15" height="12"><use href="#i-grid"/></svg>Flow Elapsed Time</div>
                    <div class="toc-line d-flex align-items-center"><span class="toc-arrow"></span><svg class="toc-ico" width="15" height="12"><use href="#i-grid"/></svg>Flow OS Summary</div>
                    <div class="toc-line d-flex align-items-center"><span class="toc-arrow"></span><svg class="toc-slim" width="13" height="15"><use href="#i-log"/></svg>Flow Log</div>
                    <div class="toc-line d-flex align-items-center"><span class="toc-arrow"><span class="tri-r d-block"></span></span><svg class="toc-ico" width="15" height="12"><use href="#i-folder"/></svg>Analysis &amp; Synthesis</div>
                    <div class="toc-line d-flex align-items-center"><span class="toc-arrow"></span><svg class="toc-ico" width="15" height="15"><use href="#i-info"/></svg>Flow Messages</div>
                    <div class="toc-line d-flex align-items-center"><span class="toc-arrow"></span><svg class="toc-ico" width="15" height="15"><use href="#i-info"/></svg>Flow Suppressed Messages</div>
                    <div class="grow-fill"></div>
                    <div class="sb-h d-flex"><div class="sb-btn"><span class="tri-l"></span></div><div class="sb-track"></div><div class="sb-thumb toc-thumb"></div><div class="sb-btn end"><span class="tri-r"></span></div></div>
                </aside>
                <main class="summary-pane d-flex flex-column">
                    <div class="flow-title">Flow Summary</div>
                    <div class="flow-filter d-flex align-items-center"><svg width="14" height="14"><use href="#i-search-blue"/></svg><input class="form-control flt-input" placeholder="&lt;&lt;Filter&gt;&gt;"></div>
                    <div class="flow-body">
                        <table class="table flow-grid">
                            <tr><td>Flow Status</td><td>Successful - Tue Apr 14 22:16:23 2026</td></tr>
                            <tr><td>Quartus Prime Version</td><td>25.1std.0 Build 1129 10/21/2025 SC Lite Edition</td></tr>
                            <tr><td>Revision Name</td><td>addsub4</td></tr>
                            <tr><td>Top-level Entity Name</td><td>addsub4</td></tr>
                            <tr><td>Family</td><td>Cyclone V</td></tr>
                            <tr><td>Device</td><td>5CSEMA5F31C6</td></tr>
                            <tr><td>Timing Models</td><td>Final</td></tr>
                            <tr><td>Logic utilization (in ALMs)</td><td>N/A</td></tr>
                            <tr><td>Total registers</td><td>0</td></tr>
                            <tr><td>Total pins</td><td>3</td></tr>
                            <tr><td>Total virtual pins</td><td>0</td></tr>
                            <tr><td>Total block memory bits</td><td>0</td></tr>
                            <tr><td>Total DSP Blocks</td><td>0</td></tr>
                            <tr><td>Total HSSI RX PCSs</td><td>0</td></tr>
                            <tr><td>Total HSSI PMA RX Deserializers</td><td>0</td></tr>
                            <tr><td>Total HSSI TX PCSs</td><td>0</td></tr>
                            <tr><td>Total HSSI PMA TX Serializers</td><td>0</td></tr>
                            <tr><td>Total PLLs</td><td>0</td></tr>
                            <tr><td>Total DLLs</td><td>0</td></tr>
                        </table>
                    </div>
                </main>
            </div>
            <div class="split-dots split-wide"><i></i></div>
        </div>
    </div>

    <!-- messages -->
    <div class="msg-dock d-flex">
        <div class="dock-rail d-flex flex-column">
            <svg class="rail-btn" width="16" height="16"><use href="#i-x"/></svg>
            <svg class="rail-btn" width="16" height="16"><use href="#i-float"/></svg>
            <div class="rail-pin pin-on"><svg width="14" height="14"><use href="#i-pin"/></svg></div>
            <svg class="rail-btn" width="16" height="16"><use href="#i-list"/></svg>
            <div class="rail-text">Messages</div>
        </div>
        <div class="dock-main d-flex flex-column">
            <div class="msg-tools d-flex align-items-center">
                <button class="btn all-btn" type="button">All</button>
                <button class="btn flag-btn" type="button"><svg width="16" height="16"><use href="#i-err"/></svg></button>
                <button class="btn flag-btn gap-flag" type="button"><svg width="16" height="16"><use href="#i-crit"/></svg></button>
                <button class="btn flag-btn gap-flag" type="button"><svg width="16" height="16"><use href="#i-warn"/></svg></button>
                <span class="count-dot">1</span>
                <button class="btn flag-btn gap-mark" type="button"><svg width="16" height="16"><use href="#i-mark"/></svg></button>
                <div class="msg-filter d-flex align-items-center"><svg width="15" height="15"><use href="#i-funnel"/></svg><input class="form-control flt-input" placeholder="&lt;&lt;Filter&gt;&gt;"></div>
                <button class="btn find-btn find-one" type="button"><svg width="16" height="16"><use href="#i-find"/></svg><span><u>F</u>ind...</span></button>
                <button class="btn find-btn find-two" type="button"><svg width="16" height="16"><use href="#i-find-star"/></svg><span>Find Ne<u>x</u>t</span></button>
            </div>
            <div class="msg-body d-flex">
                <div class="msg-table d-flex flex-column">
                    <div class="msg-col-head d-flex"><div class="mh-type">Type</div><div class="mh-id">ID</div><div class="mh-msg">Message</div></div>
                    <div class="msg-list">
                        <div class="msg-line d-flex align-items-center tone-warn"><span class="msg-arrow"></span><svg width="16" height="16"><use href="#i-warn"/></svg><span class="msg-num">18236</span><span class="msg-text">Number of processors has not been specified which may cause overloading on shared machines.  Set the global assignment NUM_PARALLEL_PROCESSORS in your QSF to an appropriate value for best performance.</span></div>
                        <div class="msg-line d-flex align-items-center tone-info"><span class="msg-arrow"></span><svg width="16" height="16"><use href="#i-info"/></svg><span class="msg-num">20030</span><span class="msg-text">Parallel compilation is enabled and will use 12 of the 12 processors detected</span></div>
                        <div class="msg-line d-flex align-items-center tone-info"><span class="msg-arrow"><span class="tri-r d-block"></span></span><svg width="16" height="16"><use href="#i-info"/></svg><span class="msg-num">12021</span><span class="msg-text">Found 1 design units, including 1 entities, in source file addsub4.bdf</span></div>
                        <div class="msg-line d-flex align-items-center tone-info"><span class="msg-arrow"></span><svg width="16" height="16"><use href="#i-info"/></svg><span class="msg-num">12127</span><span class="msg-text">Elaborating entity "addsub4" for the top level hierarchy</span></div>
                        <div class="msg-line d-flex align-items-center tone-info"><span class="msg-arrow"></span><svg width="16" height="16"><use href="#i-info"/></svg><span class="msg-num">286030</span><span class="msg-text">Timing-Driven Synthesis is running</span></div>
                        <div class="msg-line d-flex align-items-center tone-info"><span class="msg-arrow"><span class="tri-r d-block"></span></span><svg width="16" height="16"><use href="#i-info"/></svg><span class="msg-num">16010</span><span class="msg-text">Generating hard_block partition "hard_block:auto_generated_inst"</span></div>
                        <div class="msg-line d-flex align-items-center tone-info"><span class="msg-arrow"><span class="tri-r d-block"></span></span><svg width="16" height="16"><use href="#i-info"/></svg><span class="msg-num">21057</span><span class="msg-text">Implemented 4 device resources after synthesis - the final resource count might be different</span></div>
                        <div class="msg-line d-flex align-items-center tone-info"><span class="msg-arrow"><span class="tri-r d-block"></span></span><svg width="16" height="16"><use href="#i-info"/></svg><span class="msg-num"></span><span class="msg-text">Quartus Prime Analysis &amp; Synthesis was successful. 0 errors, 1 warning</span></div>
                    </div>
                    <div class="msg-hbar d-flex"><div class="sb-btn"><span class="tri-l"></span></div><div class="sb-track"></div><div class="sb-btn end"><span class="tri-r"></span></div></div>
                </div>
                <div class="sb-v d-flex flex-column">
                    <div class="sb-vbtn"><span class="tri-u"></span></div>
                    <div class="sb-vthumb"></div>
                    <div class="sb-vbtn end"><span class="tri-d"></span></div>
                    <div class="corner-box msg-hbar"></div>
                </div>
            </div>
            <div class="dock-line"></div>
            <div class="d-flex">
                <div class="view-tab">System</div>
                <div class="view-tab on">Processing (11)</div>
            </div>
        </div>
    </div>

    <footer class="status-strip d-flex justify-content-end">
        <span class="st-xy">122, 266</span>
        <span class="st-zoom">100%</span>
        <span class="st-time">00:00:07</span>
    </footer>

    <!-- red marks drawn over the window -->
    <div class="red-box red-tab"></div>
    <div class="red-box red-task"></div>
    <div class="red-line"></div>
    <div class="red-dot"></div>

    <script src="https://cdn.jsdelivr.net/npm/bootstrap@5.3.0/dist/js/bootstrap.bundle.min.js"></script>
</body>
</html>
